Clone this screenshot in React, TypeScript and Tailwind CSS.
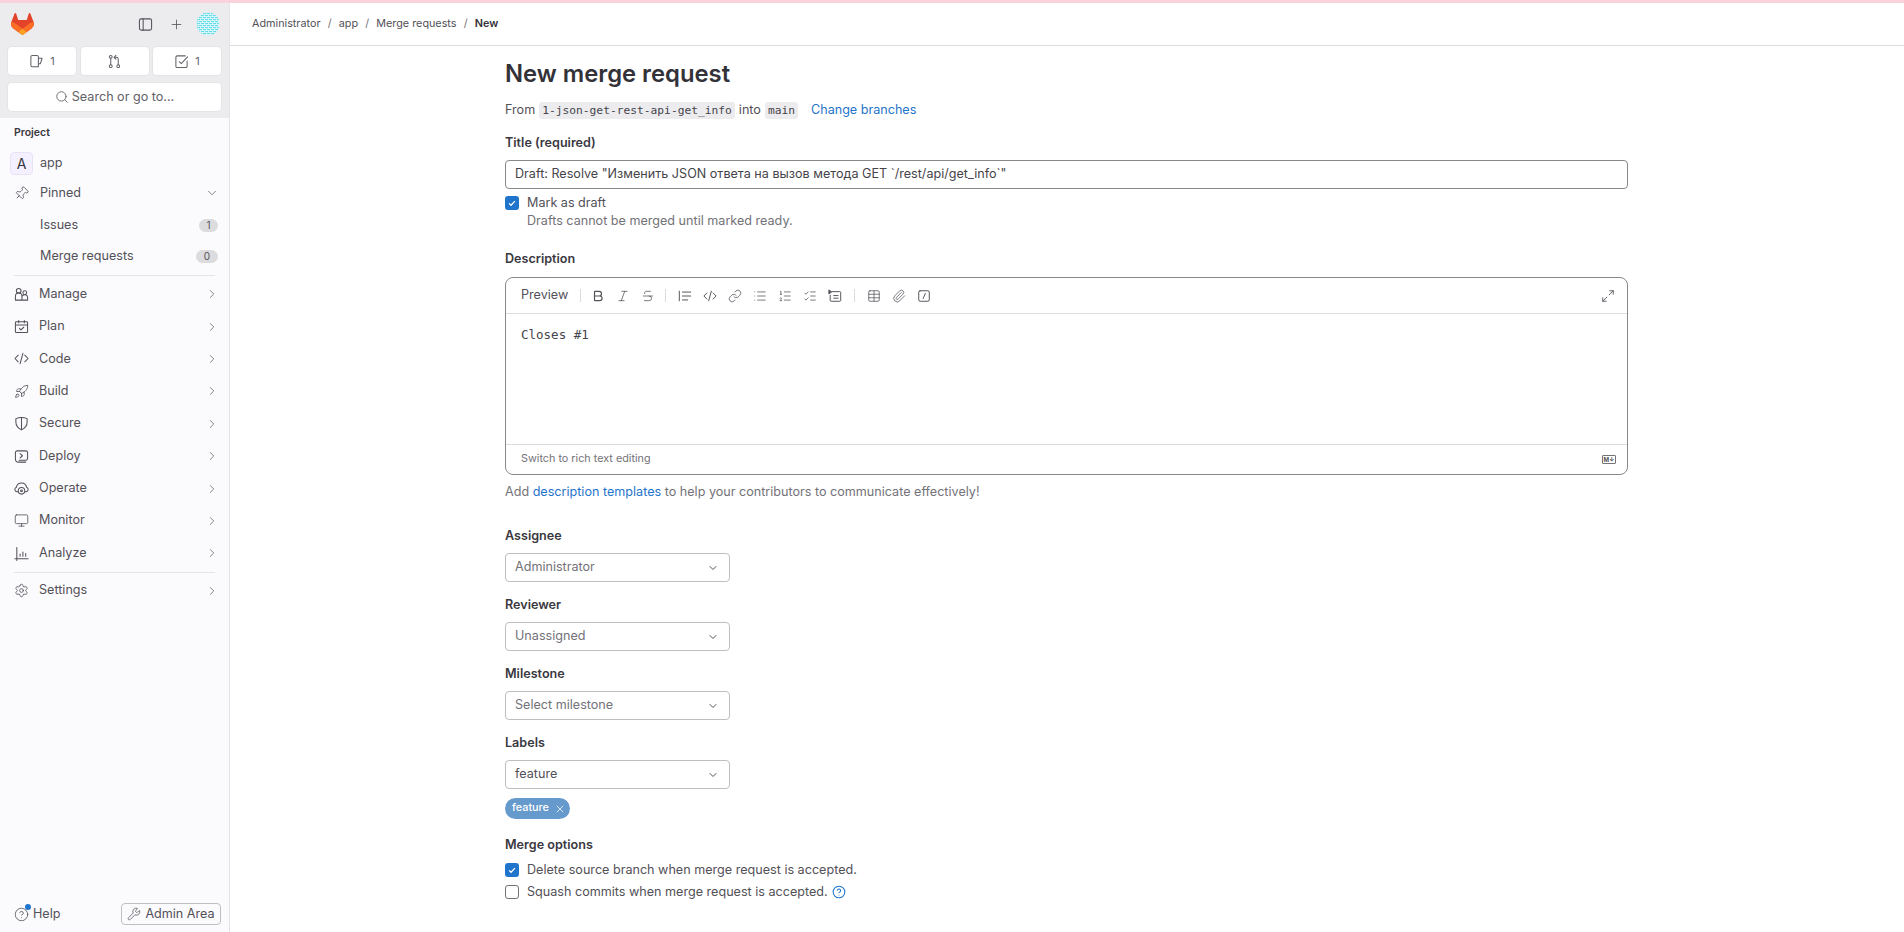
import type { ReactNode } from 'react'
import {
  Bold,
  ChevronDown,
  ChevronRight,
  CircleHelp,
  Italic,
  Link,
  List,
  ListChecks,
  ListOrdered,
  Maximize2,
  Monitor,
  Paperclip,
  Pin,
  Plus,
  Rocket,
  Search,
  Settings,
  Strikethrough,
  Table,
  Wrench,
  X,
} from 'lucide-react'

type IconProps = { className?: string }

function GlIcon({ className, children }: IconProps & { children: ReactNode }) {
  return (
    <svg viewBox="0 0 16 16" fill="none" stroke="currentColor" strokeWidth="1.1" strokeLinecap="round" strokeLinejoin="round" className={className}>
      {children}
    </svg>
  )
}

function Tanuki() {
  return (
    <svg viewBox="0 0 25 24" className="w-[23px] h-[22px]">
      <path d="m24.507 9.5-.034-.09L21.082.562a.896.896 0 0 0-1.694.091l-2.29 7.01H7.825L5.535.653a.898.898 0 0 0-1.694-.09L.451 9.411.416 9.5a6.297 6.297 0 0 0 2.09 7.278l.012.01.03.022 5.16 3.867 2.56 1.935 1.554 1.176a1.051 1.051 0 0 0 1.268 0l1.555-1.176 2.56-1.935 5.197-3.89.014-.01A6.297 6.297 0 0 0 24.507 9.5Z" fill="#E24329" />
      <path d="m24.507 9.5-.034-.09a11.44 11.44 0 0 0-4.56 2.051l-7.447 5.632 4.742 3.584 5.197-3.89.014-.01A6.297 6.297 0 0 0 24.507 9.5Z" fill="#FC6D26" />
      <path d="m7.707 20.677 2.56 1.935 1.555 1.176a1.051 1.051 0 0 0 1.268 0l1.555-1.176 2.56-1.935-4.743-3.584-4.755 3.584Z" fill="#FCA326" />
      <path d="M5.01 11.461a11.43 11.43 0 0 0-4.56-2.05L.416 9.5a6.297 6.297 0 0 0 2.09 7.278l.012.01.03.022 5.16 3.867 4.745-3.584-7.444-5.632Z" fill="#FC6D26" />
    </svg>
  )
}

function Avatar() {
  const cells = [1, 3, 5, 7, 9, 11, 13, 15, 17, 19, 21]
  return (
    <svg viewBox="0 0 24 24" className="w-[24px] h-[24px]">
      <clipPath id="avatar-clip"><circle cx="12" cy="12" r="11.5" /></clipPath>
      <circle cx="12" cy="12" r="11.8" fill="#ecfbfd" stroke="#dcdcde" strokeWidth="0.4" />
      <g clipPath="url(#avatar-clip)" fill="#63dbe9">
        {cells.map(x => cells.map(y => (
          <rect key={`${x}-${y}`} x={x} y={y} width={(x + y) % 4 === 0 ? 2 : 1.2} height="1.2" />
        )))}
      </g>
    </svg>
  )
}

const IssuesIcon = ({ className }: IconProps) => (
  <GlIcon className={className}>
    <path d="M10 13.5V3a1.5 1.5 0 0 0-1.5-1.5h-5A1.5 1.5 0 0 0 2 3v9a1.5 1.5 0 0 0 1.5 1.5H10Z" />
    <path d="M10 4.5h4l-2 6h-2" />
  </GlIcon>
)
const MrIcon = ({ className }: IconProps) => (
  <GlIcon className={className}>
    <circle cx="4" cy="3" r="1.5" />
    <circle cx="4" cy="13" r="1.5" />
    <circle cx="12" cy="13" r="1.5" />
    <path d="M4 4.5v7M12 11.5V5.5a2 2 0 0 0-2-2H8M9.5 1.5 7.5 3.5l2 2" />
  </GlIcon>
)
const TodoIcon = ({ className }: IconProps) => (
  <GlIcon className={className}>
    <path d="M14 7.5V13a1.5 1.5 0 0 1-1.5 1.5h-9A1.5 1.5 0 0 1 2 13V3.5A1.5 1.5 0 0 1 3.5 2H12" />
    <path d="m5.5 8 2.2 2.2L14.5 3" />
  </GlIcon>
)
const SidebarToggle = ({ className }: IconProps) => (
  <GlIcon className={className}>
    <rect x="1.5" y="2" width="13" height="12" rx="2" />
    <path d="M5.5 2v12" />
  </GlIcon>
)
const ManageIcon = ({ className }: IconProps) => (
  <GlIcon className={className}>
    <circle cx="5" cy="4" r="2.5" />
    <circle cx="11.5" cy="6" r="2" />
    <path d="M1.5 14V10a3.5 3.5 0 0 1 7 0v4ZM8.5 14h6v-3a3 3 0 0 0-5.5-1.5" />
  </GlIcon>
)
const PlanIcon = ({ className }: IconProps) => (
  <GlIcon className={className}>
    <rect x="1.5" y="3" width="13" height="11.5" rx="1" />
    <path d="M1.5 6.5h13M5 1.5V4M11 1.5V4M5.8 10l1.6 1.6L10.4 8.8" />
  </GlIcon>
)
const CodeIcon = ({ className }: IconProps) => (
  <GlIcon className={className}>
    <path d="M4.5 4.5 1 8l3.5 3.5M11.5 4.5 15 8l-3.5 3.5M9.5 2.5l-3 11" />
  </GlIcon>
)
const ShieldIcon = ({ className }: IconProps) => (
  <GlIcon className={className}>
    <path d="M8 14.8C4 13 2 10.5 2 6.5V2.8c3.8-1.6 8.2-1.6 12 0v3.7c0 4-2 6.5-6 8.3Z" />
    <path d="M8 2v12.5" />
  </GlIcon>
)
const DeployIcon = ({ className }: IconProps) => (
  <GlIcon className={className}>
    <path d="M1.5 11V4a2 2 0 0 1 2-2h9a2 2 0 0 1 2 2v6a2 2 0 0 1-2 2H5.5" />
    <path d="M1.5 11a3 3 0 0 0 3 3h8M6.5 5l2.5 2.2-2.5 2.3" />
  </GlIcon>
)
const OperateIcon = ({ className }: IconProps) => (
  <GlIcon className={className}>
    <path d="M4 11.5H3a2.5 2.5 0 0 1-.5-4.8 5.6 5.6 0 0 1 11 0 2.5 2.5 0 0 1-.5 4.8h-1" />
    <circle cx="8" cy="10.5" r="3.5" />
    <circle cx="8" cy="10.5" r="1" />
  </GlIcon>
)
const AnalyzeIcon = ({ className }: IconProps) => (
  <GlIcon className={className}>
    <path d="M1 13.5h14M3 1.5v14M6.5 8.5v2.5M9.5 6.5V11M12.5 8v3" />
  </GlIcon>
)
const QuoteIcon = ({ className }: IconProps) => (
  <GlIcon className={className}>
    <path d="M1.5 2.5v11M5 3.5h9.5M5 8h9.5M5 12.5h6" />
  </GlIcon>
)
const CollapseIcon = ({ className }: IconProps) => (
  <GlIcon className={className}>
    <path d="M5 3h8.5a1 1 0 0 1 1 1v9a1 1 0 0 1-1 1h-10a1 1 0 0 1-1-1V7M6.5 7.5h5M6.5 10.5h5" />
    <path d="M1 1.5v4l3-2Z" fill="currentColor" />
  </GlIcon>
)
const SlashIcon = ({ className }: IconProps) => (
  <GlIcon className={className}>
    <rect x="2" y="2" width="12" height="12" rx="1.5" />
    <path d="M9.5 5 7 11" />
  </GlIcon>
)

const navIcon = 'w-[15px] h-[15px] text-[#535158] shrink-0'

const navItems = [
  { label: 'Manage', icon: <ManageIcon className={navIcon} /> },
  { label: 'Plan', icon: <PlanIcon className={navIcon} /> },
  { label: 'Code', icon: <CodeIcon className={navIcon} /> },
  { label: 'Build', icon: <Rocket strokeWidth={1.3} className={navIcon} /> },
  { label: 'Secure', icon: <ShieldIcon className={navIcon} /> },
  { label: 'Deploy', icon: <DeployIcon className={navIcon} /> },
  { label: 'Operate', icon: <OperateIcon className={navIcon} /> },
  { label: 'Monitor', icon: <Monitor strokeWidth={1.3} className={navIcon} /> },
  { label: 'Analyze', icon: <AnalyzeIcon className={navIcon} /> },
]

function NavRow({ label, icon }: { label: string; icon: ReactNode }) {
  return (
    <div className="h-[32.4px] flex items-center pl-[14px] pr-[10px] text-[#535158]">
      <span className="w-[25px] flex">{icon}</span>
      <span className="flex-1">{label}</span>
      <ChevronRight strokeWidth={1.5} className="w-[14px] h-[14px] text-[#737278]" />
    </div>
  )
}

function Counter({ icon, count }: { icon: ReactNode; count?: string }) {
  return (
    <div className="w-[68px] h-[28px] bg-white rounded flex items-center justify-center gap-[6px] text-[11px] text-[#626168] shadow-[0_0_0_1px_rgba(0,0,0,0.03)]">
      {icon}
      {count && <span>{count}</span>}
    </div>
  )
}

function Sidebar() {
  const topIcon = 'w-[15px] h-[15px]'
  return (
    <aside className="w-[230px] shrink-0 h-full bg-[#fbfafd] border-r border-[#e4e4e7] flex flex-col text-[12.6px]">
      <div className="bg-[#ececef] h-[115px] px-[8px] pt-[5px] shrink-0">
        <div className="h-[32px] flex items-center pl-[3px] pr-[1px] text-[#535158]">
          <Tanuki />
          <SidebarToggle className="w-[15px] h-[15px] ml-auto" />
          <Plus strokeWidth={1.3} className="w-[15px] h-[15px] ml-[16px]" />
          <span className="ml-[12px] flex"><Avatar /></span>
        </div>
        <div className="flex justify-between mt-[7px]">
          <Counter icon={<IssuesIcon className={topIcon} />} count="1" />
          <Counter icon={<MrIcon className={topIcon} />} />
          <Counter icon={<TodoIcon className={topIcon} />} count="1" />
        </div>
        <div className="mt-[8px] h-[28px] bg-white rounded flex items-center justify-center gap-[3px] text-[#626168] shadow-[0_0_0_1px_rgba(0,0,0,0.03)]">
          <Search strokeWidth={1.5} className="w-[14px] h-[14px]" />
          Search or go to...
        </div>
      </div>
      <div className="px-[14px] mt-[8px] text-[10.5px] font-semibold text-[#3a383f] leading-[14px]">Project</div>
      <div className="h-[30px] mt-[8px] flex items-center pl-[10px] text-[#535158]">
        <span className="w-[23px] h-[23px] rounded-[4px] bg-[#f4f0ff] border border-[#e8e2f7] flex items-center justify-center text-[14px] text-[#333238]">A</span>
        <span className="ml-[7px]">app</span>
      </div>
      <div className="h-[30px] flex items-center pl-[14px] pr-[10px] text-[#535158]">
        <span className="w-[26px] flex"><Pin strokeWidth={1.3} className={`${navIcon} rotate-45`} /></span>
        <span className="flex-1">Pinned</span>
        <ChevronDown strokeWidth={1.5} className="w-[14px] h-[14px] text-[#737278]" />
      </div>
      <div className="h-[31px] mt-[2px] flex items-center pl-[40px] pr-[11px] text-[#535158]">
        <span className="flex-1">Issues</span>
        <span className="w-[19px] h-[13px] rounded-full bg-[#dcdcde] text-[10px] flex items-center justify-center">1</span>
      </div>
      <div className="h-[30px] flex items-center pl-[40px] pr-[11px] text-[#535158]">
        <span className="flex-1">Merge requests</span>
        <span className="w-[22px] h-[13px] rounded-full bg-[#dcdcde] text-[10px] flex items-center justify-center">0</span>
      </div>
      <div className="mx-[14px] mt-[4px] mb-[2px] border-t border-[#e4e4e7]" />
      {navItems.map(item => <NavRow key={item.label} {...item} />)}
      <div className="mx-[14px] my-[2px] border-t border-[#e4e4e7]" />
      <NavRow label="Settings" icon={<Settings strokeWidth={1.3} className={navIcon} />} />
      <div className="mt-auto h-[36px] pl-[14px] pr-[8px] flex items-center text-[#535158]">
        <span className="relative flex mr-[4px]">
          <CircleHelp strokeWidth={1.3} className="w-[15px] h-[15px]" />
          <span className="absolute -top-[3px] -right-[2px] w-[6px] h-[6px] rounded-full bg-[#1f75cb]" />
        </span>
        <span>Help</span>
        <span className="ml-auto h-[22px] w-[100px] border border-[#bfbfc3] rounded flex items-center justify-center gap-[4px]">
          <Wrench strokeWidth={1.3} className="w-[14px] h-[14px]" />
          Admin Area
        </span>
      </div>
    </aside>
  )
}

function SelectBox({ value, dark }: { value: string; dark?: boolean }) {
  return (
    <div className={`w-[225px] h-[29px] mt-[9px] border border-[#bfbfc3] rounded flex items-center pl-[9px] pr-[10px] ${dark ? 'text-[#535158]' : 'text-[#737278]'}`}>
      <span className="flex-1">{value}</span>
      <ChevronDown strokeWidth={2} className="w-[12px] h-[12px] text-[#535158]" />
    </div>
  )
}

function FieldLabel({ children, className }: { children: ReactNode; className?: string }) {
  return <div className={`font-semibold text-[#3a383f] leading-[16px] ${className ?? ''}`}>{children}</div>
}

function CheckBox({ checked }: { checked?: boolean }) {
  if (!checked) return <span className="w-[14px] h-[14px] rounded-[3px] border border-[#737278] bg-white shrink-0" />
  return (
    <span className="w-[14px] h-[14px] rounded-[3px] bg-[#1f75cb] shrink-0 flex items-center justify-center">
      <svg viewBox="0 0 12 12" fill="none" stroke="#fff" strokeWidth="1.5" className="w-[10px] h-[10px]"><path d="m2.5 6.5 2.3 2.2 4.7-5" /></svg>
    </span>
  )
}

function Code({ children }: { children: ReactNode }) {
  return <code className="bg-[#ececef] rounded-[3px] px-[3px] py-[2px] font-['DejaVu_Sans_Mono',monospace] text-[11.25px] text-[#45444a]">{children}</code>
}

function Toolbar() {
  const cls = 'w-[14px] h-[14px] text-[#535158]'
  return (
    <div className="h-[36px] border-b border-[#dcdcde] flex items-center pl-[15px] pr-[12px] text-[#535158]">
      <span>Preview</span>
      <span className="w-px h-[13px] bg-[#dcdcde] ml-[12px]" />
      <div className="flex items-center gap-[11px] ml-[10px]">
        <Bold strokeWidth={2} className={cls} />
        <Italic strokeWidth={1.3} className={cls} />
        <Strikethrough strokeWidth={1.3} className={cls} />
      </div>
      <span className="w-px h-[13px] bg-[#dcdcde] ml-[10px]" />
      <div className="flex items-center gap-[11px] ml-[12px]">
        <QuoteIcon className={cls} />
        <CodeIcon className={cls} />
        <Link strokeWidth={1.3} className={cls} />
        <List strokeWidth={1.3} className={cls} />
        <ListOrdered strokeWidth={1.3} className={cls} />
        <ListChecks strokeWidth={1.3} className={cls} />
        <CollapseIcon className={cls} />
      </div>
      <span className="w-px h-[13px] bg-[#dcdcde] ml-[12px]" />
      <div className="flex items-center gap-[11px] ml-[12px]">
        <Table strokeWidth={1.3} className={cls} />
        <Paperclip strokeWidth={1.3} className={cls} />
        <SlashIcon className={cls} />
      </div>
      <Maximize2 strokeWidth={1.5} className="w-[14px] h-[14px] ml-auto" />
    </div>
  )
}

export default function App() {
  const crumbs = ['Administrator', 'app', 'Merge requests']
  return (
    <div className="h-[932px] w-[1904px] overflow-hidden bg-white flex flex-col font-['Inter',sans-serif] text-[12.6px] text-[#535158]">
      <div className="h-[3px] bg-[#f8d3dc] shrink-0" />
      <div className="flex flex-1 min-h-0">
        <Sidebar />
        <main className="flex-1 min-w-0">
          <header className="h-[43px] border-b border-[#dcdcde] flex items-center pl-[22px] text-[10.8px] text-[#535158]">
            {crumbs.map(c => (
              <span key={c} className="flex items-center">
                {c}
                <span className="mx-[7.2px] text-[#737278]">/</span>
              </span>
            ))}
            <span className="font-semibold text-[#333238]">New</span>
          </header>
          <div className="ml-[275px] w-[1123px]">
            <h1 className="mt-[11px] text-[23.8px] leading-[34px] font-semibold text-[#333238]">New merge request</h1>
            <div className="mt-[10px] h-[18px] flex items-center">
              <span>From</span>
              <span className="ml-[4px]"><Code>1-json-get-rest-api-get_info</Code></span>
              <span className="ml-[4px]">into</span>
              <span className="ml-[4px]"><Code>main</Code></span>
              <span className="ml-[13px] text-[#1f75cb]">Change branches</span>
            </div>
            <FieldLabel className="mt-[16px]">Title (required)</FieldLabel>
            <div className="mt-[9px] h-[29px] border border-[#89888d] rounded flex items-center pl-[9px] text-[#45444a]">
              Draft: Resolve "Изменить JSON ответа на вызов метода GET `/rest/api/get_info`"
            </div>
            <div className="mt-[5px] flex items-start">
              <span className="mt-[2px] flex"><CheckBox checked /></span>
              <div className="ml-[8px] leading-[18px]">
                <div className="text-[#535158]">Mark as draft</div>
                <div className="text-[#737278]">Drafts cannot be merged until marked ready.</div>
              </div>
            </div>
            <FieldLabel className="mt-[21px]">Description</FieldLabel>
            <div className="mt-[10px] h-[198px] border border-[#89888d] rounded-[8px] flex flex-col">
              <Toolbar />
              <div className="flex-1 pl-[15px] pt-[12px] font-['DejaVu_Sans_Mono',monospace] text-[12.5px] leading-[18px] text-[#45444a]">Closes #1</div>
              <div className="h-[30px] border-t border-[#dcdcde] flex items-center pl-[15px] pr-[11px] text-[10.8px] text-[#737278]">
                <span className="flex-1">Switch to rich text editing</span>
                <span className="w-[14px] h-[9px] border border-[#737278] rounded-[1px] text-[6px] font-bold leading-[7px] text-center text-[#535158]">M↓</span>
              </div>
            </div>
            <div className="mt-[8px] leading-[18px] text-[#737278]">
              Add <span className="text-[#1f75cb]">description templates</span> to help your contributors to communicate effectively!
            </div>
            <FieldLabel className="mt-[27px]">Assignee</FieldLabel>
            <SelectBox value="Administrator" />
            <FieldLabel className="mt-[15px]">Reviewer</FieldLabel>
            <SelectBox value="Unassigned" />
            <FieldLabel className="mt-[15px]">Milestone</FieldLabel>
            <SelectBox value="Select milestone" />
            <FieldLabel className="mt-[15px]">Labels</FieldLabel>
            <SelectBox value="feature" dark />
            <div className="mt-[9px] w-[65px] h-[21px] rounded-full bg-[#6699cc] text-white text-[10.8px] font-medium flex items-center pl-[7px] gap-[5px]">
              feature
              <X strokeWidth={1.5} className="w-[12px] h-[12px]" />
            </div>
            <FieldLabel className="mt-[18px]">Merge options</FieldLabel>
            <div className="mt-[8px] flex items-center h-[18px] text-[#535158]">
              <CheckBox checked />
              <span className="ml-[8px]">Delete source branch when merge request is accepted.</span>
            </div>
            <div className="mt-[4px] flex items-center h-[18px] text-[#535158]">
              <CheckBox />
              <span className="ml-[8px]">Squash commits when merge request is accepted.</span>
              <CircleHelp strokeWidth={1.8} className="w-[14px] h-[14px] ml-[4px] text-[#1f75cb]" />
            </div>
          </div>
        </main>
      </div>
    </div>
  )
}
